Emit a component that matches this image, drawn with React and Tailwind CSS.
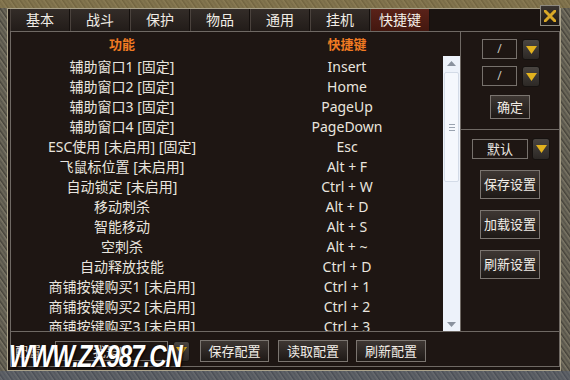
import React from "react";

const rows = [
  ["辅助窗口1 [固定]", "Insert"],
  ["辅助窗口2 [固定]", "Home"],
  ["辅助窗口3 [固定]", "PageUp"],
  ["辅助窗口4 [固定]", "PageDown"],
  ["ESC使用 [未启用] [固定]", "Esc"],
  ["飞鼠标位置 [未启用]", "Alt + F"],
  ["自动锁定 [未启用]", "Ctrl + W"],
  ["移动刺杀", "Alt + D"],
  ["智能移动", "Alt + S"],
  ["空刺杀", "Alt + ~"],
  ["自动释放技能", "Ctrl + D"],
  ["商铺按键购买1 [未启用]", "Ctrl + 1"],
  ["商铺按键购买2 [未启用]", "Ctrl + 2"],
  ["商铺按键购买3 [未启用]", "Ctrl + 3"],
];

const tabs = ["基本", "战斗", "保护", "物品", "通用", "挂机", "快捷键"];

function Arrow({ h = "h-[21px]", w = "w-[18px]" }) {
  return (
    <div
      className={`${w} ${h} shrink-0 rounded-[3px] bg-[linear-gradient(#4a4541,#2c2825)] border border-[#161210] flex items-center justify-center`}
    >
      <svg width="11" height="8" viewBox="0 0 11 8">
        <path d="M0 0H11L5.5 8Z" fill="#e2b21e" />
      </svg>
    </div>
  );
}

function Btn({ children, cls }) {
  return (
    <div
      className={`${cls} shrink-0 flex items-center justify-center border border-[#7b7570] bg-[linear-gradient(#3e3733,#1e1916)] text-[#f2eee8] text-[13px] leading-none`}
    >
      {children}
    </div>
  );
}

export default function App() {
  return (
    <div className="relative w-[570px] h-[380px] overflow-hidden pl-[7px] pt-[8px] pr-[9px] pb-[9px] font-['Noto_Sans','Noto_Sans_CJK_SC',sans-serif] bg-[linear-gradient(to_bottom,rgba(150,128,70,0.55)_0px,rgba(150,128,70,0.55)_8px,transparent_8px),linear-gradient(to_top,rgba(80,92,120,0.45)_0px,rgba(80,92,120,0.45)_9px,transparent_9px),repeating-linear-gradient(55deg,#5b584e_0px,#7c7766_2px,#45423a_3px,#6e6a5b_5px,#565349_7px)]">
      <div className="w-full h-full border border-[#aaa28a] bg-[#1b1411] flex flex-col">
        {/* tabs */}
        <div className="h-[22px] flex pl-[2px] shrink-0">
          {tabs.map((t, i) => (
            <div
              key={t}
              className={`w-[60px] h-full flex items-center justify-center text-[14px] leading-none border-r border-[#15100e] border-l border-l-[#4a423d] ${
                i === 6
                  ? "bg-[linear-gradient(#5a2219,#43170f)] text-[#f4efe8]"
                  : "bg-[linear-gradient(#332c28,#221c19)] text-[#f1ede6]"
              }`}
            >
              {t}
            </div>
          ))}
        </div>

        {/* content panel */}
        <div className="ml-[2px] w-[550px] h-[336px] border border-[#6f6964] bg-[#1e1613] flex flex-col">
          <div className="h-[300px] border-b border-[#6f6964] flex shrink-0">
            {/* list pane */}
            <div className="w-[450px] h-full border-r border-[#6f6964] flex flex-col">
              <div className="h-[24px] flex items-center text-[13px] font-bold text-[#f07a22] leading-none shrink-0">
                <div className="w-[222px] text-center">功能</div>
                <div className="w-[210px] pl-[18px] text-center">快捷键</div>
              </div>
              <div className="flex flex-1 min-h-0">
                <div className="w-[432px] overflow-hidden pt-[1px]">
                  {rows.map(([a, b]) => (
                    <div key={a} className="h-[20px] flex items-center text-[14px] text-[#e9e5df] leading-none whitespace-nowrap">
                      <div className="w-[222px] text-center">{a}</div>
                      <div className="w-[210px] pl-[18px] text-center">{b}</div>
                    </div>
                  ))}
                </div>
                <div className="w-[17px] h-full bg-[#edf2fa] flex flex-col items-center">
                  <div className="h-[14px] flex items-center justify-center">
                    <svg width="9" height="5" viewBox="0 0 9 5">
                      <path d="M0 5H9L4.5 0Z" fill="#8a929e" />
                    </svg>
                  </div>
                  <div className="mt-[2px] w-[15px] h-[110px] rounded-[2px] border border-[#d3dbe7] bg-[#f5f8fd] flex flex-col items-center justify-center gap-[2px]">
                    <div className="w-[6px] h-[1px] bg-[#9aa3b0]" />
                    <div className="w-[6px] h-[1px] bg-[#9aa3b0]" />
                    <div className="w-[6px] h-[1px] bg-[#9aa3b0]" />
                  </div>
                  <div className="flex-1" />
                  <div className="h-[14px] flex items-center justify-center">
                    <svg width="9" height="5" viewBox="0 0 9 5">
                      <path d="M0 0H9L4.5 5Z" fill="#8a929e" />
                    </svg>
                  </div>
                </div>
              </div>
            </div>

            {/* right pane */}
            <div className="flex-1 flex flex-col">
              <div className="h-[98px] border-b border-[#6f6964] pt-[7px] flex flex-col shrink-0">
                <div className="flex pl-[21px] gap-[5px] items-start">
                  <div className="w-[35px] h-[20px] border border-[#77716c] text-[#c8c4be] text-[12px] flex items-center justify-center leading-none">/</div>
                  <Arrow />
                </div>
                <div className="flex pl-[21px] gap-[5px] items-start mt-[6px]">
                  <div className="w-[35px] h-[20px] border border-[#77716c] text-[#c8c4be] text-[12px] flex items-center justify-center leading-none">/</div>
                  <Arrow />
                </div>
                <div className="pl-[29px] mt-[8px]">
                  <Btn cls="w-[40px] h-[24px]">确定</Btn>
                </div>
              </div>
              <div className="flex flex-col pt-[8px]">
                <div className="flex pl-[11px] gap-[4px] items-start">
                  <div className="mt-[1px] w-[56px] h-[20px] border border-[#77716c] text-[#ece8e2] text-[13px] flex items-center justify-center leading-none">默认</div>
                  <Arrow h="h-[22px]" />
                </div>
                <div className="pl-[19px] mt-[10px] flex flex-col gap-[11px]">
                  <Btn cls="w-[60px] h-[29px]">保存设置</Btn>
                  <Btn cls="w-[60px] h-[29px]">加载设置</Btn>
                  <Btn cls="w-[60px] h-[29px]">刷新设置</Btn>
                </div>
              </div>
            </div>
          </div>

          {/* bottom bar */}
          <div className="flex-1 flex items-center pt-[4px]">
            <div className="ml-[4px] w-[40px] text-[13px] text-[#ece8e2] leading-none">配置</div>
            <div className="w-[113px] h-[20px] border border-[#77716c] text-[#ece8e2] text-[13px] flex items-center justify-center leading-none">我是Ju</div>
            <div className="ml-[5px]">
              <Arrow w="w-[17px]" />
            </div>
            <div className="ml-[10px]">
              <Btn cls="w-[69px] h-[22px]">保存配置</Btn>
            </div>
            <div className="ml-[9px]">
              <Btn cls="w-[70px] h-[22px]">读取配置</Btn>
            </div>
            <div className="ml-[8px]">
              <Btn cls="w-[70px] h-[22px]">刷新配置</Btn>
            </div>
          </div>
        </div>
      </div>

      {/* close button */}
      <div className="absolute left-[540px] top-[5px] w-[20px] h-[21px] border border-[#8e8a80] bg-[linear-gradient(#3a3430,#1c1714)] flex items-center justify-center">
        <svg width="12" height="12" viewBox="0 0 12 12">
          <path d="M1 1L11 11M11 1L1 11" stroke="#d9a828" strokeWidth="3" strokeLinecap="square" />
        </svg>
      </div>

      {/* watermark */}
      <div className="absolute left-[9px] top-[341px] origin-top-left scale-y-[1.3] text-[24px] font-bold italic text-white tracking-[-1px] leading-none font-['Liberation_Sans',sans-serif] [text-shadow:1px_1px_2px_#000]">
        WWW.ZX987.CN
      </div>
    </div>
  );
}
